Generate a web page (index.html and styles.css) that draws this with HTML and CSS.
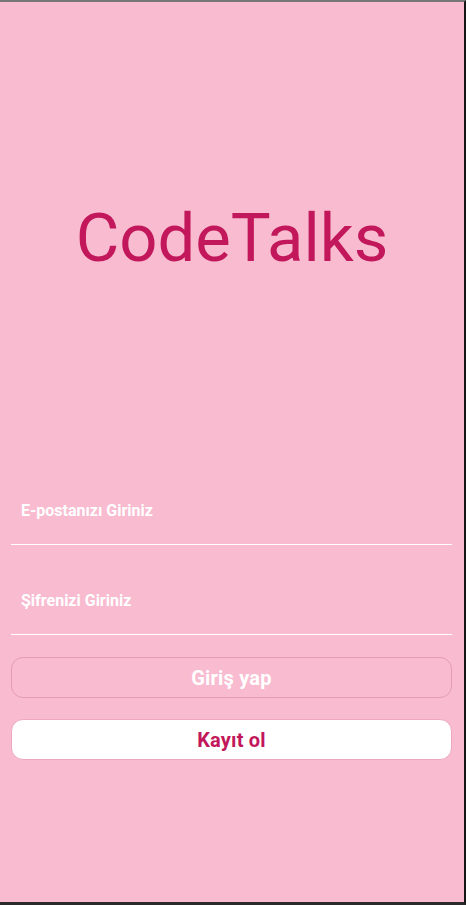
FILE: index.html
```html
<!DOCTYPE html>
<html lang="tr">
<head>
<meta charset="utf-8">
<title>CodeTalks</title>
<link rel="stylesheet" href="styles.css">
</head>
<body>
<div class="screen">
  <h1 class="title">CodeTalks</h1>
  <form class="form">
    <label class="field"><span class="hint">E-postanızı Giriniz</span></label>
    <label class="field"><span class="hint">Şifrenizi Giriniz</span></label>
    <button type="button" class="btn btn-primary">Giriş yap</button>
    <button type="button" class="btn btn-secondary">Kayıt ol</button>
  </form>
</div>
</body>
</html>
```

FILE: styles.css
```css
* { box-sizing: border-box; }
html, body { margin: 0; padding: 0; }
body {
  font-family: Roboto, "Noto Sans", "Liberation Sans", sans-serif;
  background: #1c1c1c;
}
.screen {
  width: 466px;
  height: 905px;
  background: #F8BBD0;
  border-top: 2px solid #777777;
  border-right: 2px solid #161616;
  border-bottom: 3px solid #2a2a2a;
  padding: 0 12px 0 11px;
  display: flex;
  flex-direction: column;
}
.title {
  margin: 196px 0 0 0;
  font-size: 67px;
  line-height: 80px;
  font-weight: 400;
  color: #C2185B;
  text-align: center;
  padding-left: 1px;
}
.form {
  margin-top: 177px;
  display: flex;
  flex-direction: column;
}
.field {
  display: block;
  height: 90px;
  padding: 47px 0 0 10px;
  border-bottom: 1px solid #ffffff;
}
.hint {
  display: block;
  font-size: 16px;
  line-height: 18px;
  font-weight: 700;
  color: #ffffff;
}
.btn {
  height: 41px;
  border-radius: 12px;
  font-family: inherit;
  font-size: 20px;
  font-weight: 700;
  line-height: 22px;
  letter-spacing: 0.2px;
  padding: 0;
  display: flex;
  align-items: center;
  justify-content: center;
  cursor: pointer;
}
.btn-primary {
  margin-top: 22px;
  background: transparent;
  border: 1px solid #E69BB5;
  color: #ffffff;
}
.btn-secondary {
  margin-top: 21px;
  background: #ffffff;
  border: 1px solid #EDA8C0;
  color: #C2185B;
}
```
